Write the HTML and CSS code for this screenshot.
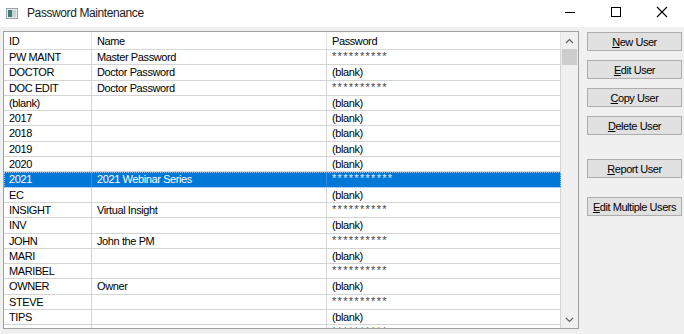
FILE: index.html
```html
<!DOCTYPE html>
<html>
<head>
<meta charset="utf-8">
<link rel="stylesheet" href="styles.css">
</head>
<body>
<div class="window">
  <div class="titlebar">
    <svg class="appicon" width="12" height="11" viewBox="0 0 12 11">
      <rect x="0.5" y="0.5" width="11" height="10" fill="#e8ecec" stroke="#9aa3a6"/>
      <rect x="2" y="2" width="4" height="7" fill="#3d7f72"/>
      <rect x="6" y="2" width="4" height="7" fill="#c9d3d3"/>
    </svg>
    <span class="title">Password Maintenance</span>
    <div class="controls">
      <svg class="ctl" width="46" height="26" viewBox="0 0 46 26"><line x1="18" y1="12.5" x2="28" y2="12.5" stroke="#000" stroke-width="1"/></svg>
      <svg class="ctl" width="46" height="26" viewBox="0 0 46 26"><rect x="18.5" y="7.5" width="9" height="9" fill="none" stroke="#000" stroke-width="1"/></svg>
      <svg class="ctl" width="46" height="26" viewBox="0 0 46 26"><path d="M18 7 L28 17 M28 7 L18 17" stroke="#000" stroke-width="1.1" fill="none"/></svg>
    </div>
  </div>
  <div class="content">
    <div class="listbox">
      <div class="grid">
        <div class="hdr">
          <div class="c c1">ID</div>
          <div class="c c2">Name</div>
          <div class="c c3">Password</div>
        </div>
        <div class="rows">
          <div class="row"><div class="c c1">PW MAINT</div><div class="c c2">Master Password</div><div class="c c3 stars">**********</div></div>
          <div class="row"><div class="c c1">DOCTOR</div><div class="c c2">Doctor Password</div><div class="c c3">(blank)</div></div>
          <div class="row"><div class="c c1">DOC EDIT</div><div class="c c2">Doctor Password</div><div class="c c3 stars">**********</div></div>
          <div class="row"><div class="c c1">(blank)</div><div class="c c2"></div><div class="c c3">(blank)</div></div>
          <div class="row"><div class="c c1">2017</div><div class="c c2"></div><div class="c c3">(blank)</div></div>
          <div class="row"><div class="c c1">2018</div><div class="c c2"></div><div class="c c3">(blank)</div></div>
          <div class="row"><div class="c c1">2019</div><div class="c c2"></div><div class="c c3">(blank)</div></div>
          <div class="row"><div class="c c1">2020</div><div class="c c2"></div><div class="c c3">(blank)</div></div>
          <div class="row sel"><div class="c c1">2021</div><div class="c c2">2021 Webinar Series</div><div class="c c3 stars">***********</div></div>
          <div class="row"><div class="c c1">EC</div><div class="c c2"></div><div class="c c3">(blank)</div></div>
          <div class="row"><div class="c c1">INSIGHT</div><div class="c c2">Virtual Insight</div><div class="c c3 stars">**********</div></div>
          <div class="row"><div class="c c1">INV</div><div class="c c2"></div><div class="c c3">(blank)</div></div>
          <div class="row"><div class="c c1">JOHN</div><div class="c c2">John the PM</div><div class="c c3 stars">**********</div></div>
          <div class="row"><div class="c c1">MARI</div><div class="c c2"></div><div class="c c3">(blank)</div></div>
          <div class="row"><div class="c c1">MARIBEL</div><div class="c c2"></div><div class="c c3 stars">**********</div></div>
          <div class="row"><div class="c c1">OWNER</div><div class="c c2">Owner</div><div class="c c3">(blank)</div></div>
          <div class="row"><div class="c c1">STEVE</div><div class="c c2"></div><div class="c c3 stars">**********</div></div>
          <div class="row"><div class="c c1">TIPS</div><div class="c c2"></div><div class="c c3">(blank)</div></div>
          <div class="row"><div class="c c1"></div><div class="c c2"></div><div class="c c3 stars">**********</div></div>
        </div>
      </div>
      <div class="vscroll">
        <div class="sbtn"><svg width="9" height="6" viewBox="0 0 9 6"><path d="M1 5 L4.5 1.5 L8 5" fill="none" stroke="#606060" stroke-width="1.2"/></svg></div>
        <div class="thumb"></div>
        <div class="track"></div>
        <div class="sbtn"><svg width="9" height="6" viewBox="0 0 9 6"><path d="M1 1 L4.5 4.5 L8 1" fill="none" stroke="#606060" stroke-width="1.2"/></svg></div>
      </div>
    </div>
    <div class="buttons">
      <div class="btn"><u>N</u>ew User</div>
      <div class="btn"><u>E</u>dit User</div>
      <div class="btn"><u>C</u>opy User</div>
      <div class="btn"><u>D</u>elete User</div>
      <div class="btn gap-lg"><u>R</u>eport User</div>
      <div class="btn gap-md"><u>E</u>dit Multiple Users</div>
    </div>
  </div>
</div>
</body>
</html>
```

FILE: styles.css
```css
html, body {
  margin: 0;
  padding: 0;
}
body {
  width: 684px;
  height: 334px;
  overflow: hidden;
  background: #f0f0f0;
  font-family: "Liberation Sans", Arial, sans-serif;
  color: #000;
}
.window {
  width: 684px;
  height: 334px;
  display: flex;
  flex-direction: column;
}
.titlebar {
  height: 27px;
  background: #ffffff;
  display: flex;
  align-items: center;
  flex: none;
}
.appicon {
  margin-left: 6px;
}
.title {
  margin-left: 9px;
  font-size: 12px;
  letter-spacing: -0.4px;
  color: #1a1a1a;
  margin-top: -1px;
}
.controls {
  margin-left: auto;
  display: flex;
  align-self: flex-start;
  margin-right: -1px;
}
.ctl {
  display: block;
}
.content {
  display: flex;
  padding: 4px 0 0 3px;
}
.listbox {
  width: 574px;
  height: 296px;
  border: 1px solid #a0a0a0;
  background: #ffffff;
  display: flex;
  overflow: hidden;
  flex: none;
}
.grid {
  width: 557px;
  display: flex;
  flex-direction: column;
  overflow: hidden;
  font-size: 11px;
  letter-spacing: -0.4px;
}
.hdr {
  height: 17px;
  border-bottom: 1px solid #d8d8d8;
  display: flex;
  flex: none;
}
.hdr .c {
  line-height: 18px;
  border-right: 1px solid #e3e3e3;
}
.rows {
  flex: 1;
  overflow: hidden;
}
.row {
  height: 15.3px;
  box-sizing: border-box;
  border-bottom: 1px solid #d4d4d4;
  display: flex;
}
.c {
  box-sizing: border-box;
  border-right: 1px solid #d4d4d4;
  white-space: nowrap;
  overflow: hidden;
  line-height: 14.3px;
}
.c1 { width: 88px; padding-left: 5px; }
.c2 { width: 235px; padding-left: 5px; }
.c3 { width: 234px; padding-left: 5px; }
.stars {
  letter-spacing: 1.3px;
  color: #444;
  line-height: 12px;
}
.row.sel {
  background: #0078d7;
  color: #ffffff;
  outline: 1px dotted #9cc6f0;
  outline-offset: -1px;
}
.row.sel .c {
  border-right-color: #2f8fe0;
}
.row.sel .stars {
  color: #e0ecfa;
}
.vscroll {
  width: 17px;
  background: #f0f0f0;
  display: flex;
  flex-direction: column;
  flex: none;
}
.sbtn {
  height: 17px;
  display: flex;
  align-items: center;
  justify-content: center;
  flex: none;
}
.thumb {
  height: 16px;
  margin: 0 1px;
  background: #cdcdcd;
  flex: none;
}
.track {
  flex: 1;
}
.buttons {
  margin-left: 8px;
  width: 95px;
  padding-top: 1px;
  display: flex;
  flex-direction: column;
  gap: 9px;
}
.btn {
  height: 19px;
  box-sizing: border-box;
  border: 1px solid #adadad;
  background: #e1e1e1;
  font-size: 11px;
  letter-spacing: -0.45px;
  display: flex;
  align-items: center;
  justify-content: center;
  white-space: nowrap;
}
.btn u {
  text-decoration-thickness: 1px;
  text-underline-offset: 1px;
}
.gap-lg { margin-top: 15px; }
.gap-md { margin-top: 10px; }
```
